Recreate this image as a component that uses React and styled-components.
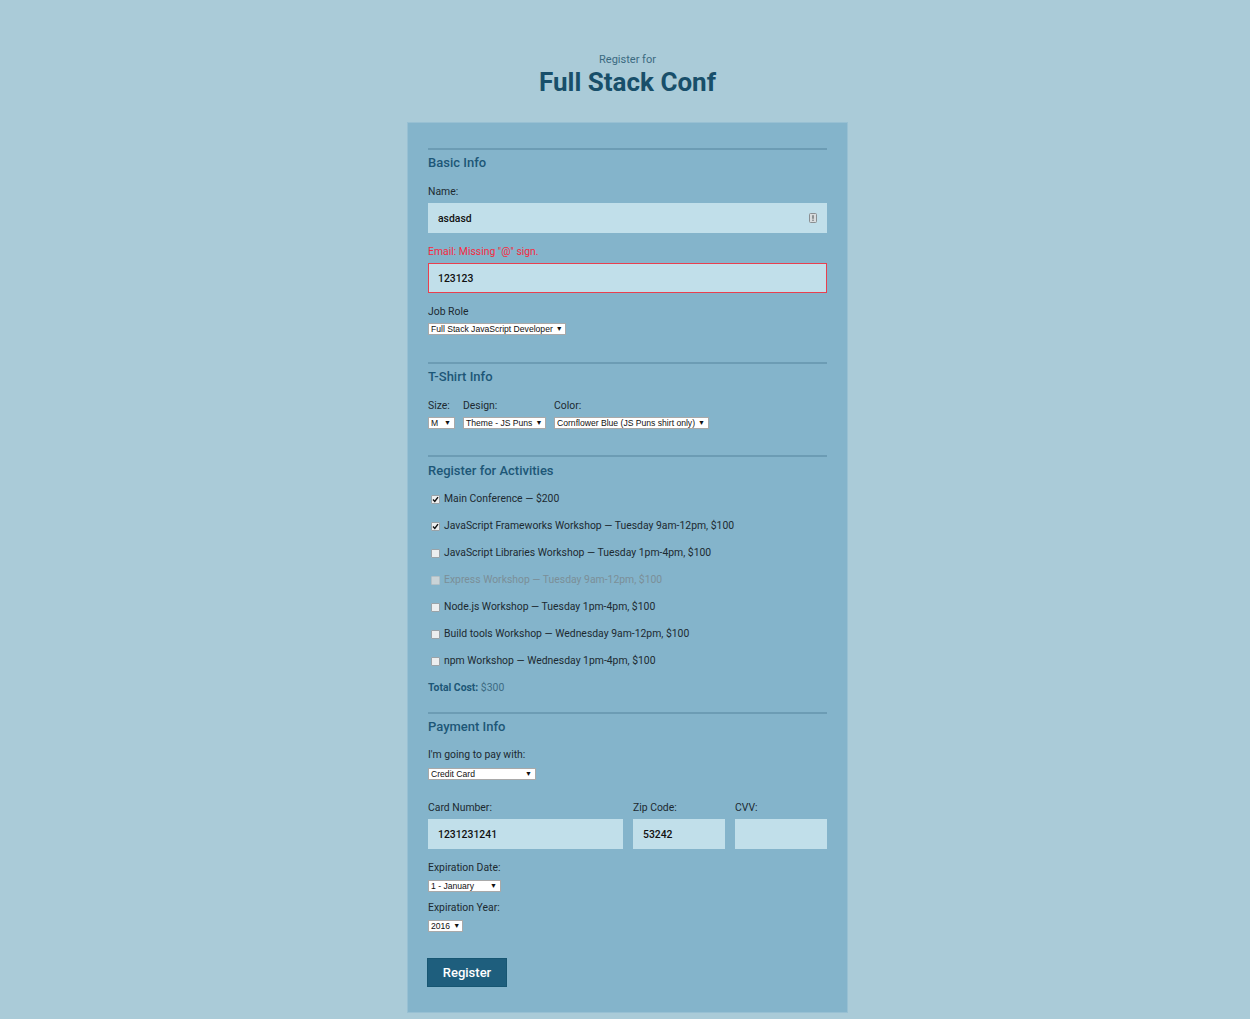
import React from "react";
import styled, { createGlobalStyle } from "styled-components";

const Global = createGlobalStyle`
  html, body { margin: 0; padding: 0; }
  body {
    background: #aacbd8;
    font-family: Roboto, "Open Sans", Arial, sans-serif;
    color: #1c2a31;
  }
`;

const Page = styled.div`
  padding: 53px 0 6px 5px;
`;

const Header = styled.header`
  text-align: center;
  margin-bottom: 25px;
`;

const Kicker = styled.p`
  margin: 0;
  font-size: 11px;
  line-height: 14px;
  color: #3b6a81;
`;

const Title = styled.h1`
  margin: 0;
  font-size: 26px;
  line-height: 30px;
  font-weight: 700;
  color: #184f6a;
`;

const Form = styled.form`
  box-sizing: border-box;
  width: 441px;
  margin: 0 auto;
  background: #84b4cb;
  border: 1px solid #98c0d3;
  padding: 25px 20px 25px;
`;

const Section = styled.fieldset`
  border: 0;
  margin: 0 0 ${(p) => p.$gap || 0}px;
  padding: 0;
  border-top: 2px solid #6c9cb4;
  min-width: 0;
`;

const Heading = styled.h2`
  margin: ${(p) => p.$top ?? 5}px 0 0;
  font-size: 13px;
  line-height: 16px;
  font-weight: 500;
  color: #1d5777;
`;

const Label = styled.label`
  display: block;
  margin-top: ${(p) => p.$top ?? 12}px;
  font-size: 10.4px;
  line-height: 14px;
  color: ${(p) => (p.$error ? "#f62a3f" : "#1c2a31")};
`;

const InputWrap = styled.div`
  position: relative;
  margin-top: 4px;
`;

const Input = styled.input`
  box-sizing: border-box;
  display: block;
  width: 100%;
  height: 30px;
  margin: 0;
  padding: 0 9px;
  border: 1px solid ${(p) => (p.$error ? "#e8404f" : "#c1dfea")};
  background: #c1dfea;
  font-family: Roboto, Arial, sans-serif;
  font-size: 10.4px;
  font-weight: 500;
  color: #111;
  outline: none;
`;

const FieldIcon = styled.svg`
  position: absolute;
  right: 10px;
  top: 10px;
`;

const SelectBox = styled.div`
  box-sizing: border-box;
  display: inline-flex;
  align-items: center;
  justify-content: space-between;
  width: ${(p) => p.$w}px;
  height: 12px;
  margin-top: ${(p) => p.$top ?? 4}px;
  padding: 0 3px 0 2px;
  background: #fff;
  border: 1px solid #a9a9a9;
  font-family: Arial, "Liberation Sans", sans-serif;
  font-size: 8.6px;
  line-height: 10px;
  color: #111;
  white-space: nowrap;
  vertical-align: top;
`;

const Arrow = styled.span`
  font-size: 7px;
  margin-left: 3px;
  color: #111;
`;

const ShirtRow = styled.div`
  display: flex;
  gap: 8px;
  margin-top: 14px;
`;

const ShirtCol = styled.div`
  display: flex;
  flex-direction: column;
`;

const ActList = styled.div`
  display: flex;
  flex-direction: column;
  gap: 13px;
  margin-top: 13px;
`;

const ActRow = styled.label`
  display: flex;
  align-items: center;
  font-size: 10.4px;
  line-height: 14px;
  color: ${(p) => (p.$disabled ? "#7b8f98" : "#1c2a31")};
`;

const Box = styled.span`
  box-sizing: border-box;
  width: 9px;
  height: 9px;
  margin: 0 4px 0 3px;
  border: 1px solid ${(p) => (p.$disabled ? "#b3c0c6" : "#9aa3a8")};
  background: ${(p) => (p.$disabled ? "#c9d3d7" : "#eceeef")};
  border-radius: 1px;
  display: inline-flex;
  align-items: center;
  justify-content: center;
  flex: none;
`;

const Total = styled.p`
  margin: 0;
  font-size: 10.4px;
  line-height: 14px;
  color: #3c6b83;
  strong {
    font-weight: 700;
    color: #1d5777;
  }
`;

const CardRow = styled.div`
  display: grid;
  grid-template-columns: 195px 92px 92px;
  gap: 10px;
  margin-top: 20px;
`;

const Col = styled.div`
  display: flex;
  flex-direction: column;
`;

const Button = styled.button`
  display: block;
  box-sizing: border-box;
  margin: 24px 0 0 -1px;
  width: 80px;
  height: 29px;
  background: #1e5e7d;
  border: 1px solid #175672;
  color: #fff;
  font-family: Roboto, Arial, sans-serif;
  font-size: 13px;
  font-weight: 500;
  cursor: pointer;
`;

const Check = () => (
  <svg width="7" height="7" viewBox="0 0 7 7">
    <path d="M1 3.6 L2.8 5.4 L6 1.2" fill="none" stroke="#111" strokeWidth="1.4" />
  </svg>
);

const Select = ({ w, top, children }) => (
  <SelectBox $w={w} $top={top}>
    <span>{children}</span>
    <Arrow>▼</Arrow>
  </SelectBox>
);

const activities = [
  { t: "Main Conference — $200", c: true },
  { t: "JavaScript Frameworks Workshop — Tuesday 9am-12pm, $100", c: true },
  { t: "JavaScript Libraries Workshop — Tuesday 1pm-4pm, $100" },
  { t: "Express Workshop — Tuesday 9am-12pm, $100", d: true },
  { t: "Node.js Workshop — Tuesday 1pm-4pm, $100" },
  { t: "Build tools Workshop — Wednesday 9am-12pm, $100" },
  { t: "npm Workshop — Wednesday 1pm-4pm, $100" },
];

export default function App() {
  return (
    <>
      <Global />
      <Page>
        <Header>
          <Kicker>Register for</Kicker>
          <Title>Full Stack Conf</Title>
        </Header>
        <Form onSubmit={(e) => e.preventDefault()}>
          <Section $gap={24}>
            <Heading>Basic Info</Heading>
            <Label $top={14}>Name:</Label>
            <InputWrap>
              <Input defaultValue="asdasd" />
              <FieldIcon width="8" height="10" viewBox="0 0 8 10">
                <rect x="0.5" y="0.5" width="7" height="9" rx="1" fill="#d8dcde" stroke="#8a8f92" />
                <rect x="3.3" y="2.2" width="1.4" height="3.6" fill="#6d7275" />
                <rect x="3.3" y="6.6" width="1.4" height="1.3" fill="#6d7275" />
              </FieldIcon>
            </InputWrap>
            <Label $error>Email: Missing "@" sign.</Label>
            <InputWrap>
              <Input $error defaultValue="123123" />
            </InputWrap>
            <Label>Job Role</Label>
            <Select w={138}>Full Stack JavaScript Developer</Select>
          </Section>

          <Section $gap={26}>
            <Heading>T-Shirt Info</Heading>
            <ShirtRow>
              <ShirtCol>
                <Label $top={0}>Size:</Label>
                <Select w={27}>M</Select>
              </ShirtCol>
              <ShirtCol>
                <Label $top={0}>Design:</Label>
                <Select w={83}>Theme - JS Puns</Select>
              </ShirtCol>
              <ShirtCol>
                <Label $top={0}>Color:</Label>
                <Select w={155}>Cornflower Blue (JS Puns shirt only)</Select>
              </ShirtCol>
            </ShirtRow>
          </Section>

          <Section $gap={17}>
            <Heading $top={6}>Register for Activities</Heading>
            <ActList>
              {activities.map((a) => (
                <ActRow key={a.t} $disabled={a.d}>
                  <Box $disabled={a.d}>{a.c && <Check />}</Box>
                  {a.t}
                </ActRow>
              ))}
              <Total>
                <strong>Total Cost:</strong> $300
              </Total>
            </ActList>
          </Section>

          <Section>
            <Heading>Payment Info</Heading>
            <Label $top={13}>I'm going to pay with:</Label>
            <Select w={108} top={6}>Credit Card</Select>
            <CardRow>
              <Col>
                <Label $top={0}>Card Number:</Label>
                <InputWrap>
                  <Input defaultValue="1231231241" />
                </InputWrap>
              </Col>
              <Col>
                <Label $top={0}>Zip Code:</Label>
                <InputWrap>
                  <Input defaultValue="53242" />
                </InputWrap>
              </Col>
              <Col>
                <Label $top={0}>CVV:</Label>
                <InputWrap>
                  <Input defaultValue="" />
                </InputWrap>
              </Col>
            </CardRow>
            <Label>Expiration Date:</Label>
            <Select w={73} top={5}>1 - January</Select>
            <Label $top={7}>Expiration Year:</Label>
            <Select w={35} top={5}>2016</Select>
          </Section>

          <Button type="submit">Register</Button>
        </Form>
      </Page>
    </>
  );
}
